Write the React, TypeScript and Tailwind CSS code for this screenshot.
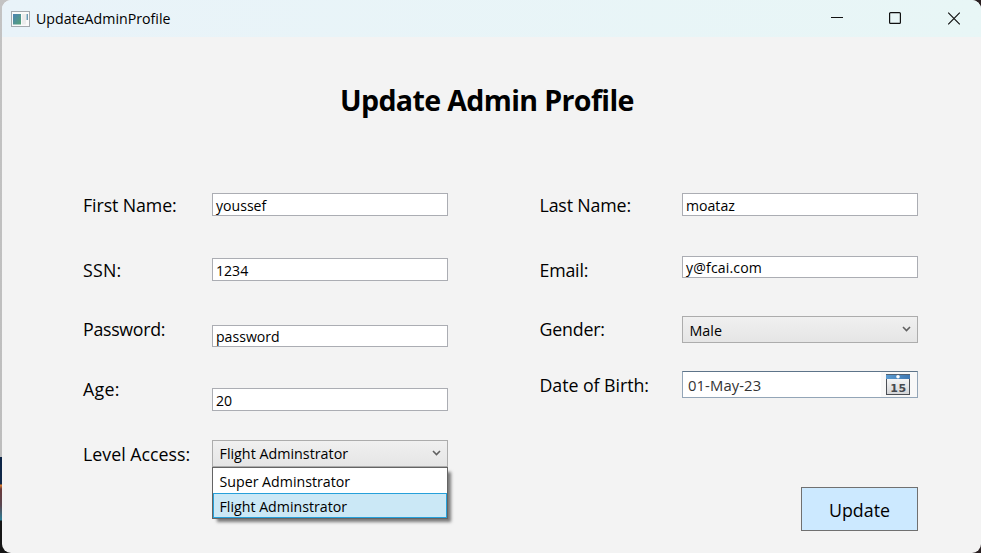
import type { ReactNode } from 'react';

const textFont = "font-['Open_Sans','Noto_Sans',sans-serif]";

function Label({ className, children }: { className: string; children: ReactNode }) {
  return <div className={`h-6 whitespace-nowrap text-[17.8px] leading-6 ${className}`}>{children}</div>;
}

function TextBox({ className, children }: { className: string; children: ReactNode }) {
  return (
    <div className={`flex w-[236px] items-start border border-[#abadb3] bg-white pl-[3px] text-[14.1px] leading-none ${className}`}>
      <span className="whitespace-nowrap leading-[19px]">{children}</span>
    </div>
  );
}

function ComboBox({ className, textClass, children }: { className: string; textClass: string; children: ReactNode }) {
  return (
    <div className={`flex h-[27px] w-[236px] items-start justify-between border border-[#acacac] bg-linear-to-b from-[#f0f0f0] to-[#e5e5e5] pl-[6.5px] pr-[6px] text-[14.3px] ${className}`}>
      <span className={`whitespace-nowrap leading-[18px] ${textClass}`}>{children}</span>
      <svg width="9" height="6" viewBox="0 0 9 6" className="mt-[9px]" fill="none" stroke="#606060" strokeWidth="1.6">
        <path d="M1 1 L4.5 4.5 L8 1" />
      </svg>
    </div>
  );
}

function AppIcon() {
  return (
    <svg width="19" height="16" viewBox="0 0 19 16">
      <defs>
        <linearGradient id="pane" x1="0" y1="0" x2="1" y2="1">
          <stop offset="0" stopColor="#4c83b4" />
          <stop offset="1" stopColor="#55a276" />
        </linearGradient>
      </defs>
      <rect x="0.5" y="0.5" width="18" height="15" fill="#fafafa" stroke="#a4a9ae" />
      <rect x="2" y="3" width="8" height="10.5" fill="url(#pane)" />
      <rect x="11" y="3" width="4" height="10.5" fill="#ececec" />
      <rect x="15.5" y="3" width="1.5" height="6" fill="#6b9bb5" />
    </svg>
  );
}

function CalendarIcon() {
  return (
    <svg width="24" height="21" viewBox="0 0 24 21">
      <defs>
        <linearGradient id="sheet" x1="0" y1="0" x2="0" y2="1">
          <stop offset="0" stopColor="#ffffff" />
          <stop offset="1" stopColor="#d3d4d6" />
        </linearGradient>
        <linearGradient id="band" x1="0" y1="0" x2="1" y2="0">
          <stop offset="0" stopColor="#5b9bd0" />
          <stop offset="1" stopColor="#3f78b2" />
        </linearGradient>
      </defs>
      <rect x="0.5" y="0.5" width="23" height="20" fill="url(#sheet)" stroke="#4b4f55" />
      <rect x="0" y="0" width="24" height="5" fill="url(#band)" />
      <path d="M0 0.5H24" stroke="#536273" />
      <circle cx="12" cy="2.8" r="1.8" fill="#fff" />
      <text x="12.5" y="17.6" textAnchor="middle" fontFamily="DejaVu Sans" fontWeight="bold" fontSize="11" letterSpacing="0.6" fill="#45494e">15</text>
    </svg>
  );
}

export default function App() {
  return (
    <div className="h-[553px] w-[981px] overflow-hidden bg-[linear-gradient(to_right,transparent_970px,#2a2022_970px),linear-gradient(to_bottom,#c3c3c3_0,#bdbdbd_457px,#0b2345_457px,#12294a_484px,#e5822f_485px,#6a3a3a_489px,#5a4650_505px,#2d7e96_520px,#151515_521px)] pl-[2px]">
      <div className={`flex h-[553px] w-[979px] flex-col overflow-hidden rounded-[9px] bg-[#f3f3f3] text-black ${textFont}`}>
        <header className="flex h-[37px] shrink-0 items-center justify-between bg-linear-to-r from-[#e9f3f9] to-[#e8f6f6] pl-[9px] pr-[20px]">
          <div className="flex items-center gap-[6px]">
            <AppIcon />
            <span className="text-[14.2px] leading-5">UpdateAdminProfile</span>
          </div>
          <svg width="130" height="14" viewBox="0 0 130 14" fill="none" stroke="#111" strokeWidth="1.2">
            <path d="M0 5.5H12" />
            <rect x="58.6" y="0.6" width="10.8" height="10.8" rx="1" />
            <path d="M117.2 0.7L128.8 12.3M128.8 0.7L117.2 12.3" />
          </svg>
        </header>
        <main className="flex flex-1 flex-col">
          <h1 className="ml-[338px] mt-[43px] h-10 whitespace-nowrap text-[28.6px] font-bold leading-10 tracking-[-0.65px]">Update Admin Profile</h1>
          <div className="flex pl-[81px] pt-[73px]">
            <div className="flex w-[129px] flex-col">
              <Label className="tracking-[-0.1px]">First Name:</Label>
              <Label className="mt-[41px] tracking-[0.2px]">SSN:</Label>
              <Label className="mt-[35px] tracking-[-0.3px]">Password:</Label>
              <Label className="mt-[36px] tracking-[0.3px]">Age:</Label>
              <Label className="mt-[41px]">Level Access:</Label>
            </div>
            <div className="flex w-[236px] flex-col">
              <TextBox className="h-[23px] pt-[2px]">youssef</TextBox>
              <TextBox className="mt-[42px] h-[23px] pt-[2px]">1234</TextBox>
              <TextBox className="mt-[44px] h-[22px] pt-[1px]">password</TextBox>
              <TextBox className="mt-[41px] h-[23px] pt-[2px]">20</TextBox>
              <ComboBox className="mt-[29px]" textClass="pt-[4px]">Flight Adminstrator</ComboBox>
              <div className="h-[52px] w-[236px] border border-[#646464] bg-white text-[14.2px] shadow-[4px_4px_3px_-1px_rgba(0,0,0,0.5)]">
                <div className="h-[25px] pl-[6.5px] pt-[4px] leading-[20px]">Super Adminstrator</div>
                <div className="h-[25px] border border-[#26a0da] bg-[#cbe8f6] pl-[5.5px] pt-[3px] leading-[20px]">Flight Adminstrator</div>
              </div>
            </div>
            <div className="ml-[91.5px] flex w-[142.5px] flex-col">
              <Label className="tracking-[-0.15px]">Last Name:</Label>
              <Label className="mt-[41px] tracking-[-0.2px]">Email:</Label>
              <Label className="mt-[35px] tracking-[-0.2px]">Gender:</Label>
              <Label className="mt-[32px] tracking-[-0.05px]">Date of Birth:</Label>
            </div>
            <div className="flex w-[236px] flex-col">
              <TextBox className="h-[23px] pt-[2px]">moataz</TextBox>
              <TextBox className="mt-[40px] h-[22px] pt-[1px] tracking-[0.15px]">y@fcai.com</TextBox>
              <ComboBox className="mt-[38px]" textClass="pt-[5px]">Male</ComboBox>
              <div className="mt-[28px] flex h-[27px] items-center justify-between border border-[#93a5b7] border-t-[#5d7489] bg-linear-to-r from-white from-[198px] to-[#f8f8f8] to-[198px] pr-[7px] text-[14.8px] text-[#333]">
                <span className="pl-[5px] pt-[1px] leading-5 tracking-[0.1px]">01-May-23</span>
                <CalendarIcon />
              </div>
              <button className="ml-[119px] mt-[89px] h-[44px] w-[117px] border border-[#707070] bg-[#cce9ff] pt-[2px] text-[17.8px]">Update</button>
            </div>
          </div>
        </main>
      </div>
    </div>
  );
}
